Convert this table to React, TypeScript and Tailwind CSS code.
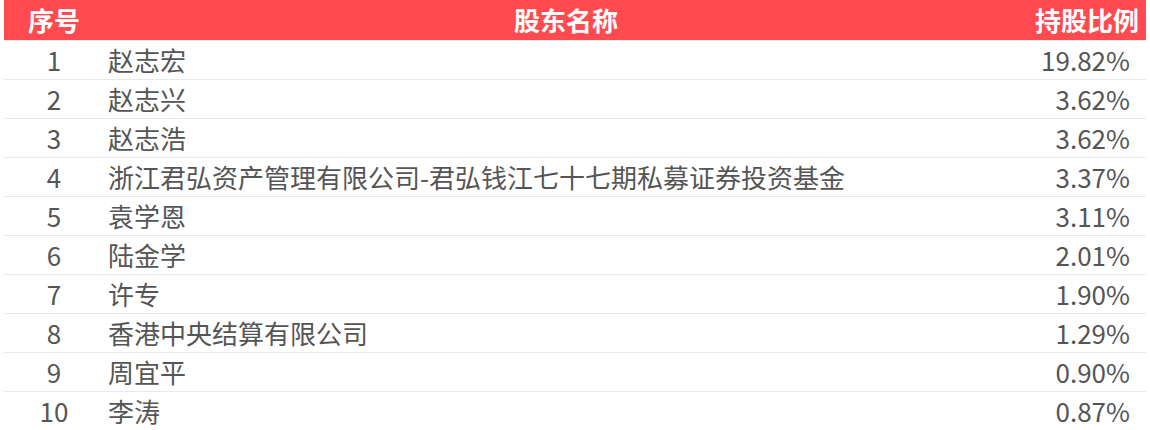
const rows: [string, string][] = [
  ["赵志宏", "19.82%"],
  ["赵志兴", "3.62%"],
  ["赵志浩", "3.62%"],
  ["浙江君弘资产管理有限公司-君弘钱江七十七期私募证券投资基金", "3.37%"],
  ["袁学恩", "3.11%"],
  ["陆金学", "2.01%"],
  ["许专", "1.90%"],
  ["香港中央结算有限公司", "1.29%"],
  ["周宜平", "0.90%"],
  ["李涛", "0.87%"],
];

export default function App() {
  return (
    <div
      className="w-[1150px] h-[430px] overflow-hidden bg-white px-1"
      style={{ fontFamily: '"Noto Sans CJK SC", "Noto Sans", sans-serif' }}
    >
      {/* HEADER */}
      <div className="border-b border-[#eeeff3]">
        <div className="grid grid-cols-[100px_1fr_118px] h-10 items-center bg-[#ff4b4f] text-white font-bold text-[26px] leading-10">
          <div className="text-center">序号</div>
          <div className="text-center">股东名称</div>
          <div className="text-right pr-[7px]">持股比例</div>
        </div>
      </div>

      {/* BODY */}
      {rows.map(([name, pct], i) => (
        <div
          key={i}
          className="grid grid-cols-[100px_1fr_118px] h-[39px] items-center border-b border-[#e8e9ef] text-[26px] leading-[38px] text-[#555555]"
        >
          <div className="text-center">{i + 1}</div>
          <div className="pl-1 whitespace-nowrap">{name}</div>
          <div className="text-right pr-4">{pct}</div>
        </div>
      ))}
    </div>
  );
}
